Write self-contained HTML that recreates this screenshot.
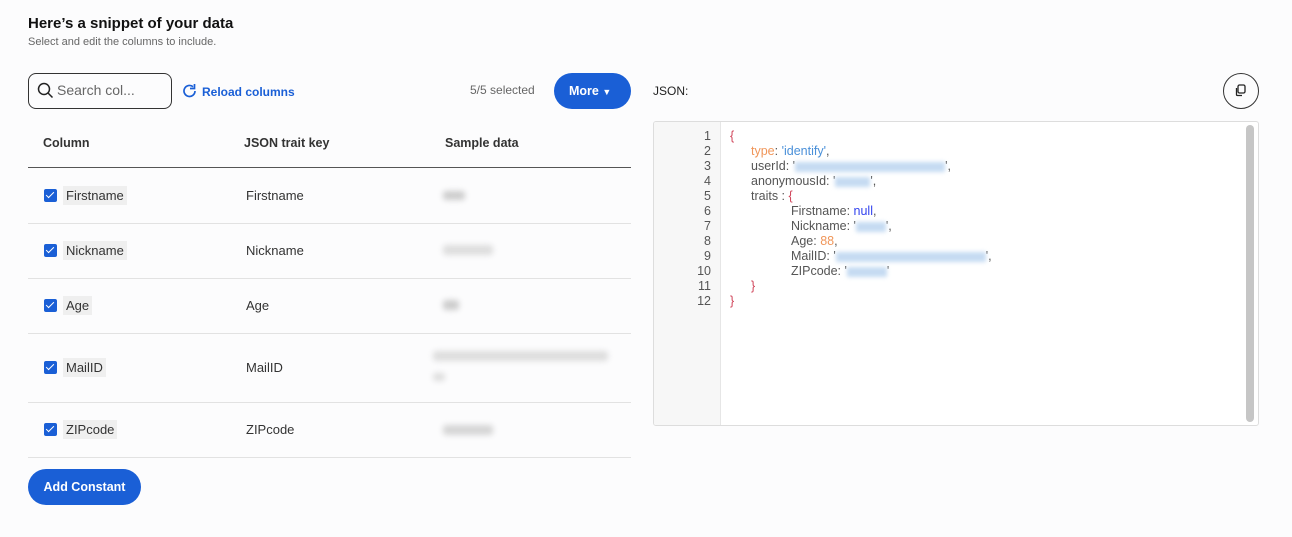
<!DOCTYPE html><html><head><style>
body{margin:0;width:1292px;height:537px;background:#fcfcfd;font-family:"Liberation Sans",sans-serif;color:#222;position:relative;overflow:hidden}
.a{position:absolute}
.blur{position:absolute;filter:blur(3px);background:#ccc;border-radius:3px}
.bb{display:inline-block;height:10px;background:#c5dbf2;filter:blur(2px);vertical-align:middle}
.row{position:absolute;left:28px;width:603px;border-bottom:1px solid #e2e2e2}
.cb{position:absolute;left:16px;width:13px;height:13px;background:#1a5fd6;border-radius:2px}
.cb:after{content:"";position:absolute;left:4px;top:1px;width:3px;height:7px;border:solid #fff;border-width:0 1.5px 1.5px 0;transform:rotate(45deg)}
.tag{position:absolute;left:35px;background:#efefef;padding:2px 3px;font-size:13px;color:#333}
.key{position:absolute;left:218px;font-size:13px;color:#333}
.code{font-size:12.5px;line-height:15px;color:#555}
.i1{padding-left:21px}.i2{padding-left:61px}
</style></head><body>
<div class="a" style="left:28px;top:15px;font-size:15px;font-weight:bold;color:#111">Here’s a snippet of your data</div>
<div class="a" style="left:28px;top:36px;font-size:11px;color:#666">Select and edit the columns to include.</div>
<div class="a" style="left:28px;top:73px;width:142px;height:34px;border:1px solid #333;border-radius:8px"></div>
<svg class="a" style="left:37px;top:82px" width="17" height="17" viewBox="0 0 17 17"><circle cx="7" cy="7" r="5.5" fill="none" stroke="#222" stroke-width="1.5"/><path d="M11 11l4.5 4.5" stroke="#222" stroke-width="1.5"/></svg>
<div class="a" style="left:57px;top:82px;font-size:14px;color:#666">Search col...</div>
<svg class="a" style="left:182px;top:83px" width="16" height="16" viewBox="0 0 16 16"><path d="M13 8a5.5 5.5 0 1 1-2-4.3" fill="none" stroke="#1a5fd6" stroke-width="1.7"/><path d="M12.5 1v4.5H8" fill="none" stroke="#1a5fd6" stroke-width="1.7"/></svg>
<div class="a" style="left:202px;top:85px;font-size:12px;font-weight:bold;color:#1a5fd6">Reload columns</div>
<div class="a" style="left:470px;top:83px;font-size:12px;color:#666">5/5 selected</div>
<div class="a" style="left:554px;top:73px;width:77px;height:36px;background:#1a5fd6;border-radius:18px;color:#fff;font-size:12.5px;font-weight:bold;line-height:36px;text-indent:15px">More <span style="font-size:9px">▼</span></div>
<div class="a" style="left:43px;top:136px;font-size:12.5px;font-weight:bold;color:#333">Column</div>
<div class="a" style="left:244px;top:136px;font-size:12.5px;font-weight:bold;color:#333">JSON trait key</div>
<div class="a" style="left:445px;top:136px;font-size:12.5px;font-weight:bold;color:#333">Sample data</div>
<div class="a" style="left:28px;top:167px;width:603px;height:1px;background:#555"></div>
<div class="row" style="top:168px;height:55px"><div class="cb" style="top:21px"></div><div class="tag" style="top:18px">Firstname</div><div class="key" style="top:20px">Firstname</div><div class="blur" style="left:415px;top:23px;width:22px;height:9px"></div></div>
<div class="row" style="top:223px;height:55px"><div class="cb" style="top:21px"></div><div class="tag" style="top:18px">Nickname</div><div class="key" style="top:20px">Nickname</div><div class="blur" style="left:415px;top:22px;width:50px;height:10px;background:#ddd"></div></div>
<div class="row" style="top:278px;height:55px"><div class="cb" style="top:21px"></div><div class="tag" style="top:18px">Age</div><div class="key" style="top:20px">Age</div><div class="blur" style="left:415px;top:22px;width:16px;height:10px"></div></div>
<div class="row" style="top:333px;height:69px"><div class="cb" style="top:28px"></div><div class="tag" style="top:25px">MailID</div><div class="key" style="top:27px">MailID</div><div class="blur" style="left:405px;top:18px;width:175px;height:10px;background:#ddd"></div><div class="blur" style="left:405px;top:40px;width:12px;height:8px;background:#ddd"></div></div>
<div class="row" style="top:402px;height:55px"><div class="cb" style="top:21px"></div><div class="tag" style="top:18px">ZIPcode</div><div class="key" style="top:20px">ZIPcode</div><div class="blur" style="left:415px;top:23px;width:50px;height:10px;background:#d5d5d5"></div></div>
<div class="a" style="left:28px;top:469px;width:113px;height:36px;background:#1a5fd6;border-radius:18px;color:#fff;font-size:12.5px;font-weight:bold;line-height:36px;text-align:center">Add Constant</div>
<div class="a" style="left:653px;top:84px;font-size:12px;color:#222">JSON:</div>
<div class="a" style="left:1223px;top:73px;width:34px;height:34px;border:1px solid #333;border-radius:50%"></div>
<svg class="a" style="left:1233px;top:83px" width="15" height="15" viewBox="0 0 15 15"><rect x="5" y="2" width="7" height="8" rx="1.5" fill="none" stroke="#222" stroke-width="1.3"/><path d="M3.5 5v6.5a1 1 0 0 0 1 1H9" fill="none" stroke="#222" stroke-width="1.3"/></svg>
<div class="a" style="left:653px;top:121px;width:604px;height:303px;border:1px solid #ddd;border-radius:3px;background:#fff;overflow:hidden">
<div class="a" style="left:0;top:0;width:66px;height:303px;background:#f7f7f7;border-right:1px solid #e6e6e6"></div>
<div class="a code" style="left:0;top:7px;width:57px;text-align:right;color:#555">1<br>2<br>3<br>4<br>5<br>6<br>7<br>8<br>9<br>10<br>11<br>12</div>
<div class="a code" style="left:76px;top:7px;white-space:nowrap"><div><span style="color:#d0455a">{</span></div>
<div class="i1"><span style="color:#f0965a">type</span>: <span style="color:#4a90d9">'identify'</span>,</div>
<div class="i1">userId: '<span class="bb" style="width:150px"></span>',</div>
<div class="i1">anonymousId: '<span class="bb" style="width:35px"></span>',</div>
<div class="i1">traits : <span style="color:#d0455a">{</span></div>
<div class="i2">Firstname: <span style="color:#3344ee">null</span>,</div>
<div class="i2">Nickname: '<span class="bb" style="width:30px"></span>',</div>
<div class="i2">Age: <span style="color:#f0965a">88</span>,</div>
<div class="i2">MailID: '<span class="bb" style="width:150px"></span>',</div>
<div class="i2">ZIPcode: '<span class="bb" style="width:40px"></span>'</div>
<div class="i1"><span style="color:#d0455a">}</span></div>
<div><span style="color:#d0455a">}</span></div></div>
<div class="a" style="left:592px;top:3px;width:8px;height:297px;background:#c6c6c6;border-radius:4px"></div>
</div>
</body></html>
